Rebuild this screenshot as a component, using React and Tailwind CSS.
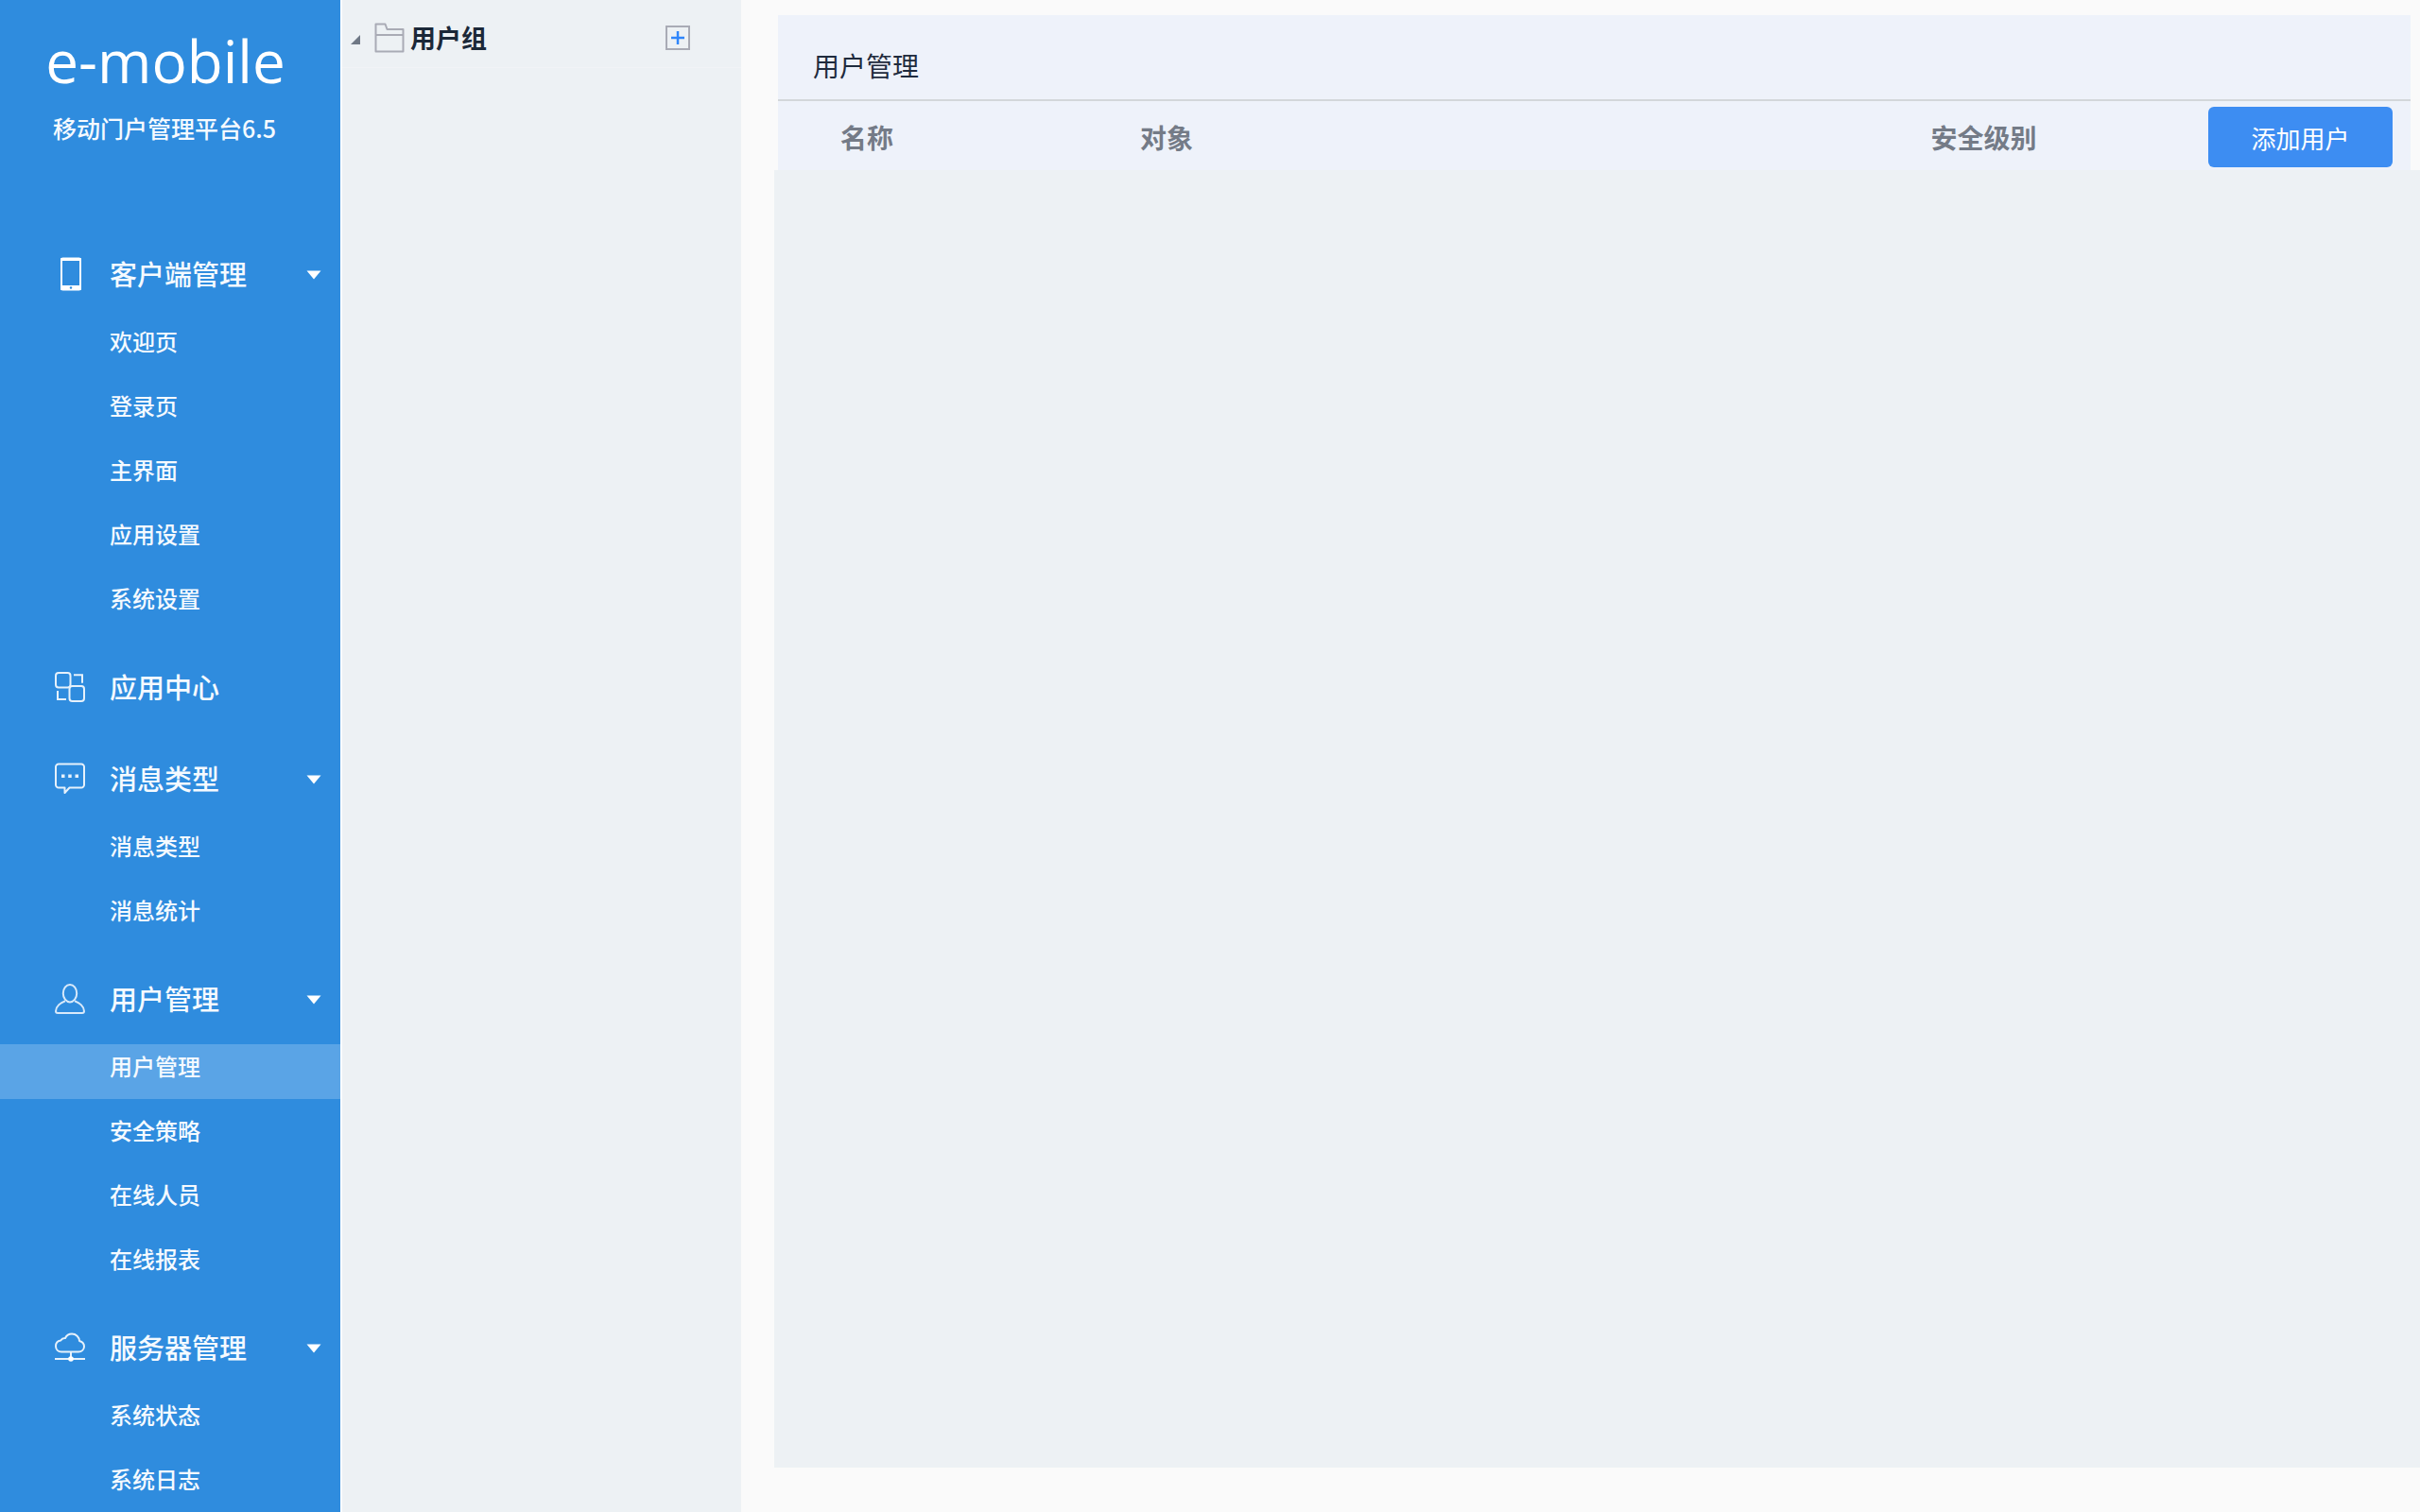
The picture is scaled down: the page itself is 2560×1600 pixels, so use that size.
import { useState } from "react";

function PhoneIcon() {
  return (
    <svg viewBox="0 0 32 36" className="h-9 w-8" fill="none" aria-hidden="true">
      <rect x="7" y="1.500" width="20" height="33" rx="1.500" stroke="white" strokeWidth="2" />
      <path d="M6 2a1 1 0 0 1 1-1h20a1 1 0 0 1 1 1v2H6zM6 30h22v4a1 1 0 0 1-1 1H7a1 1 0 0 1-1-1z" fill="white" />
      <circle cx="17" cy="32.500" r="1.200" fill="#2f8cde" />
    </svg>
  );
}

function AppsIcon() {
  return (
    <svg viewBox="0 0 32 32" className="size-8" fill="none" stroke="#e6f1fb" strokeWidth="2" aria-hidden="true">
      <rect x="1" y="1" width="15.500" height="15.500" rx="3" />
      <rect x="15.500" y="15" width="15.500" height="16" rx="3" />
      <path d="M20 3.200h9v8.500M3 20v9h9" />
    </svg>
  );
}

function MessageIcon() {
  return (
    <svg viewBox="0 0 32 34" className="h-[34px] w-8" fill="none" stroke="#e6f1fb" strokeWidth="2" strokeLinejoin="round" aria-hidden="true">
      <path d="M4 1.500h24a3 3 0 0 1 3 3v19a3 3 0 0 1-3 3H15.500l-5 5.500v-5.500H4a3 3 0 0 1-3-3v-19a3 3 0 0 1 3-3z" />
      <path d="M7 12.500h3.500v3.500H7zM14.200 12.500h3.500v3.500h-3.500zM21.500 12.500H25v3.500h-3.500z" fill="#e6f1fb" stroke="none" />
    </svg>
  );
}

function UserIcon() {
  return (
    <svg viewBox="0 0 32 32" className="size-8" fill="none" stroke="#d8e9fa" strokeWidth="2" strokeLinejoin="round" aria-hidden="true">
      <ellipse cx="16" cy="10.200" rx="7.200" ry="9.200" />
      <path d="M11 18.200C6 20 1 24 1 29c0 1.300.7 2 2 2h26c1.300 0 2-.7 2-2 0-5-5-9-10-10.800" />
    </svg>
  );
}

function CloudIcon() {
  return (
    <svg viewBox="0 0 32 32" className="size-8" fill="none" stroke="#e6f1fb" strokeWidth="2" strokeLinejoin="round" aria-hidden="true">
      <path d="M7 20.500c-3.500 0-6-2.500-6-6 0-3 2-5.500 5.200-6C7.500 6.500 9 5.800 11 6c1.300-2.800 3.800-4.500 7-4.500 4.500 0 7.800 3.300 8 7.500 3 .8 5 3 5 5.800 0 3.300-2.500 5.700-6 5.700z" />
      <path d="M17 20.500v6M0 28h32" />
      <circle cx="17" cy="28" r="2.800" fill="white" stroke="none" />
    </svg>
  );
}

const menu = [
  { id: "client", title: "客户端管理", Icon: PhoneIcon, items: ["欢迎页", "登录页", "主界面", "应用设置", "系统设置"] },
  { id: "apps", title: "应用中心", Icon: AppsIcon, items: [] },
  { id: "messages", title: "消息类型", Icon: MessageIcon, items: ["消息类型", "消息统计"] },
  { id: "users", title: "用户管理", Icon: UserIcon, items: ["用户管理", "安全策略", "在线人员", "在线报表"] },
  { id: "server", title: "服务器管理", Icon: CloudIcon, items: ["系统状态", "系统日志"] },
];

function MenuGroup({ group, active, onSelect }) {
  const [open, setOpen] = useState(true);
  const { title, Icon, items } = group;
  return (
    <li>
      <button
        type="button"
        onClick={() => setOpen(!open)}
        className="flex h-[97px] w-full items-center pl-[58px] pr-5 text-left text-[29px]"
      >
        <Icon />
        <span className="ml-[26px] flex-1">{title}</span>
        {items.length > 0 && (
          <svg viewBox="0 0 16 10" className="mt-0.5 h-[10px] w-4" fill="white" aria-hidden="true">
            <path d="M0.500 0.500h15L8 9.500z" />
          </svg>
        )}
      </button>
      {open && items.length > 0 && (
        <ul>
          {items.map((item) => {
            const key = group.id + "/" + item;
            return (
              <li key={item} className="pb-[10px]">
                <a
                  href="#"
                  onClick={(e) => {
                    e.preventDefault();
                    onSelect(key);
                  }}
                  className={
                    key === active
                      ? "flex h-[58px] items-center bg-[#5aa4e6] pb-3 pl-[116px]"
                      : "flex h-[58px] items-center pb-3 pl-[116px]"
                  }
                >
                  {item}
                </a>
              </li>
            );
          })}
        </ul>
      )}
    </li>
  );
}

function Sidebar() {
  const [active, setActive] = useState("users/用户管理");
  return (
    <aside className="w-[362px] shrink-0 overflow-hidden border-r-2 border-white bg-[#2f8cde] font-medium text-[#f5faff]">
      <header className="h-[241px] pt-[22px] text-center">
        <h1 className="pr-[10px] font-['Open_Sans',sans-serif] text-[62px] leading-[84px] text-white">e-mobile</h1>
        <p className="pr-3 text-[25px] leading-[58px]">移动门户管理平台6.5</p>
      </header>
      <nav aria-label="主菜单">
        <ul className="text-2xl">
          {menu.map((group) => (
            <MenuGroup key={group.id} group={group} active={active} onSelect={setActive} />
          ))}
        </ul>
      </nav>
    </aside>
  );
}

function GroupTree() {
  return (
    <section className="w-[422px] shrink-0 bg-[#edf1f4]">
      <div className="flex h-[72px] items-center border-b border-[#f1f3f6] pb-2 pl-2 pr-[54px] pt-4">
        <svg viewBox="0 0 12 12" className="mt-1 size-3" fill="#6f7885" aria-hidden="true">
          <path d="M11 1v10H1z" />
        </svg>
        <svg viewBox="0 0 32 32" className="ml-[14px] size-8" fill="none" stroke="#a9abb5" strokeWidth="2" strokeLinejoin="round" aria-hidden="true">
          <path d="M1.500 1.500h10l2 5.500h17v23.500h-29zM1.500 13h29" />
        </svg>
        <h2 className="ml-[6px] flex-1 pt-0.5 text-[27px] font-bold text-[#1b2838]">用户组</h2>
        <button type="button" aria-label="添加用户组" className="size-[26px]">
          <svg viewBox="0 0 26 26" className="size-[26px]" fill="none" strokeWidth="2" aria-hidden="true">
            <rect x="1" y="1" width="24" height="24" stroke="#a9abb5" />
            <path d="M13 6v14M6 13h14" stroke="#2f86fb" strokeWidth="2.500" />
          </svg>
        </button>
      </div>
    </section>
  );
}

function UserPanel() {
  return (
    <main className="flex-1 pb-[47px] pl-[35px] pt-4">
      <div className="flex h-full flex-col">
        <div className="ml-1 mr-[10px] bg-[#eef2fa]">
          <h2 className="flex h-[89px] items-center pl-[37px] pt-4 text-[28px] text-[#1f2b3d]">用户管理</h2>
          <table className="w-full table-fixed border-t-2 border-[#d3d7da] text-left text-[28px] text-[#747b87]">
            <colgroup>
              <col className="w-[22%]" />
              <col />
              <col className="w-[17%]" />
              <col className="w-[214px]" />
            </colgroup>
            <thead>
              <tr className="h-[74px]">
                <th scope="col" className="pl-[66px] pt-0.5 font-bold">名称</th>
                <th scope="col" className="pl-[3px] pt-0.5 font-bold">对象</th>
                <th scope="col" className="pt-0.5 font-bold">安全级别</th>
                <th scope="col" className="pt-0.5 font-normal">
                  <button type="button" className="block h-16 w-[195px] rounded-md bg-[#3d8df2] pt-0.5 text-[26px] text-white">
                    添加用户
                  </button>
                </th>
              </tr>
            </thead>
          </table>
        </div>
        <div className="flex-1 bg-[#edf1f4]" />
      </div>
    </main>
  );
}

export default function App() {
  return (
    <div className="flex h-screen overflow-hidden bg-[#fafafa] font-['Noto_Sans_CJK_SC',sans-serif]">
      <Sidebar />
      <GroupTree />
      <UserPanel />
    </div>
  );
}
